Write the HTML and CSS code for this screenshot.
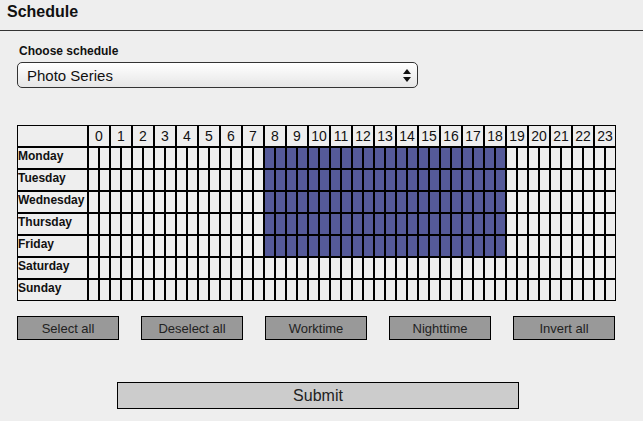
FILE: index.html
```html
<!DOCTYPE html>
<html>
<head>
<meta charset="utf-8">
<link rel="stylesheet" href="styles.css">
</head>
<body>
<div class="header">Schedule</div>
<div class="content">
  <div class="label">Choose schedule</div>
  <div class="select">
    <span>Photo Series</span>
    <svg class="arrows" width="8" height="13" viewBox="0 0 8 13"><polygon points="4,0 8,5 0,5" fill="#111"/><polygon points="4,13 8,8 0,8" fill="#111"/></svg>
  </div>
  <div class="grid">
    <div class="corner"></div>
    <div class="h">0</div><div class="h">1</div><div class="h">2</div><div class="h">3</div><div class="h">4</div><div class="h">5</div><div class="h">6</div><div class="h">7</div><div class="h">8</div><div class="h">9</div><div class="h">10</div><div class="h">11</div><div class="h">12</div><div class="h">13</div><div class="h">14</div><div class="h">15</div><div class="h">16</div><div class="h">17</div><div class="h">18</div><div class="h">19</div><div class="h">20</div><div class="h">21</div><div class="h">22</div><div class="h">23</div>

    <div class="day">Monday</div>
    <i></i><i></i><i></i><i></i><i></i><i></i><i></i><i></i><i></i><i></i><i></i><i></i><i></i><i></i><i></i><i></i>
    <i class="on"></i><i class="on"></i><i class="on"></i><i class="on"></i><i class="on"></i><i class="on"></i><i class="on"></i><i class="on"></i><i class="on"></i><i class="on"></i><i class="on"></i><i class="on"></i><i class="on"></i><i class="on"></i><i class="on"></i><i class="on"></i><i class="on"></i><i class="on"></i><i class="on"></i><i class="on"></i><i class="on"></i><i class="on"></i>
    <i></i><i></i><i></i><i></i><i></i><i></i><i></i><i></i><i></i><i></i>

    <div class="day">Tuesday</div>
    <i></i><i></i><i></i><i></i><i></i><i></i><i></i><i></i><i></i><i></i><i></i><i></i><i></i><i></i><i></i><i></i>
    <i class="on"></i><i class="on"></i><i class="on"></i><i class="on"></i><i class="on"></i><i class="on"></i><i class="on"></i><i class="on"></i><i class="on"></i><i class="on"></i><i class="on"></i><i class="on"></i><i class="on"></i><i class="on"></i><i class="on"></i><i class="on"></i><i class="on"></i><i class="on"></i><i class="on"></i><i class="on"></i><i class="on"></i><i class="on"></i>
    <i></i><i></i><i></i><i></i><i></i><i></i><i></i><i></i><i></i><i></i>

    <div class="day">Wednesday</div>
    <i></i><i></i><i></i><i></i><i></i><i></i><i></i><i></i><i></i><i></i><i></i><i></i><i></i><i></i><i></i><i></i>
    <i class="on"></i><i class="on"></i><i class="on"></i><i class="on"></i><i class="on"></i><i class="on"></i><i class="on"></i><i class="on"></i><i class="on"></i><i class="on"></i><i class="on"></i><i class="on"></i><i class="on"></i><i class="on"></i><i class="on"></i><i class="on"></i><i class="on"></i><i class="on"></i><i class="on"></i><i class="on"></i><i class="on"></i><i class="on"></i>
    <i></i><i></i><i></i><i></i><i></i><i></i><i></i><i></i><i></i><i></i>

    <div class="day">Thursday</div>
    <i></i><i></i><i></i><i></i><i></i><i></i><i></i><i></i><i></i><i></i><i></i><i></i><i></i><i></i><i></i><i></i>
    <i class="on"></i><i class="on"></i><i class="on"></i><i class="on"></i><i class="on"></i><i class="on"></i><i class="on"></i><i class="on"></i><i class="on"></i><i class="on"></i><i class="on"></i><i class="on"></i><i class="on"></i><i class="on"></i><i class="on"></i><i class="on"></i><i class="on"></i><i class="on"></i><i class="on"></i><i class="on"></i><i class="on"></i><i class="on"></i>
    <i></i><i></i><i></i><i></i><i></i><i></i><i></i><i></i><i></i><i></i>

    <div class="day">Friday</div>
    <i></i><i></i><i></i><i></i><i></i><i></i><i></i><i></i><i></i><i></i><i></i><i></i><i></i><i></i><i></i><i></i>
    <i class="on"></i><i class="on"></i><i class="on"></i><i class="on"></i><i class="on"></i><i class="on"></i><i class="on"></i><i class="on"></i><i class="on"></i><i class="on"></i><i class="on"></i><i class="on"></i><i class="on"></i><i class="on"></i><i class="on"></i><i class="on"></i><i class="on"></i><i class="on"></i><i class="on"></i><i class="on"></i><i class="on"></i><i class="on"></i>
    <i></i><i></i><i></i><i></i><i></i><i></i><i></i><i></i><i></i><i></i>

    <div class="day">Saturday</div>
    <i></i><i></i><i></i><i></i><i></i><i></i><i></i><i></i><i></i><i></i><i></i><i></i><i></i><i></i><i></i><i></i><i></i><i></i><i></i><i></i><i></i><i></i><i></i><i></i>
    <i></i><i></i><i></i><i></i><i></i><i></i><i></i><i></i><i></i><i></i><i></i><i></i><i></i><i></i><i></i><i></i><i></i><i></i><i></i><i></i><i></i><i></i><i></i><i></i>

    <div class="day">Sunday</div>
    <i></i><i></i><i></i><i></i><i></i><i></i><i></i><i></i><i></i><i></i><i></i><i></i><i></i><i></i><i></i><i></i><i></i><i></i><i></i><i></i><i></i><i></i><i></i><i></i>
    <i></i><i></i><i></i><i></i><i></i><i></i><i></i><i></i><i></i><i></i><i></i><i></i><i></i><i></i><i></i><i></i><i></i><i></i><i></i><i></i><i></i><i></i><i></i><i></i>
  </div>
  <div class="buttons">
    <button class="btn">Select all</button>
    <button class="btn">Deselect all</button>
    <button class="btn">Worktime</button>
    <button class="btn">Nighttime</button>
    <button class="btn">Invert all</button>
  </div>
  <div class="submit-row">
    <button class="submit">Submit</button>
  </div>
</div>
</body>
</html>
```

FILE: styles.css
```css
html, body {
  margin: 0;
  padding: 0;
  background: #eeeeee;
  font-family: "Liberation Sans", Arial, sans-serif;
  color: #111;
}
.header {
  height: 31px;
  box-sizing: border-box;
  border-bottom: 1px solid #333;
  padding: 3px 0 0 7px;
  font-size: 16px;
  font-weight: bold;
  line-height: 18px;
}
.content {
  padding: 12px 0 0 17px;
}
.label {
  font-size: 12px;
  font-weight: bold;
  line-height: 14px;
  padding-left: 2px;
  margin-top: 1px;
}
.select {
  margin-top: 4px;
  width: 401px;
  height: 26px;
  box-sizing: border-box;
  border: 1px solid #333;
  border-radius: 5px;
  background: linear-gradient(#ffffff, #e6e6e6);
  display: flex;
  align-items: center;
  justify-content: space-between;
  padding: 0 6px 0 9px;
  font-size: 15px;
}
.arrows {
  display: block;
}
.grid {
  margin-top: 37px;
  display: grid;
  grid-template-columns: 71px repeat(48, 11px);
  grid-auto-rows: 22px;
}
.grid > * {
  box-sizing: border-box;
  border: 1px solid #000;
  display: block;
}
.h {
  grid-column: span 2;
  text-align: center;
  font-size: 14px;
  line-height: 20px;
}
.day {
  font-size: 12px;
  font-weight: bold;
  line-height: 16px;
  padding-left: 0;
}
.on {
  background: #555a99;
}
.buttons {
  margin-top: 15px;
  display: flex;
  gap: 22px;
}
.btn {
  width: 102px;
  height: 24px;
  margin: 0;
  padding: 0;
  box-sizing: border-box;
  border: 1px solid #000;
  background: #999999;
  color: #222;
  font-family: "Liberation Sans", Arial, sans-serif;
  font-size: 13px;
  border-radius: 0;
}
.submit-row {
  margin-top: 42px;
  padding-left: 100px;
}
.submit {
  width: 402px;
  height: 27px;
  margin: 0;
  padding: 0;
  box-sizing: border-box;
  border: 1px solid #000;
  background: #cccccc;
  color: #222;
  font-family: "Liberation Sans", Arial, sans-serif;
  font-size: 16px;
  border-radius: 0;
}
```
